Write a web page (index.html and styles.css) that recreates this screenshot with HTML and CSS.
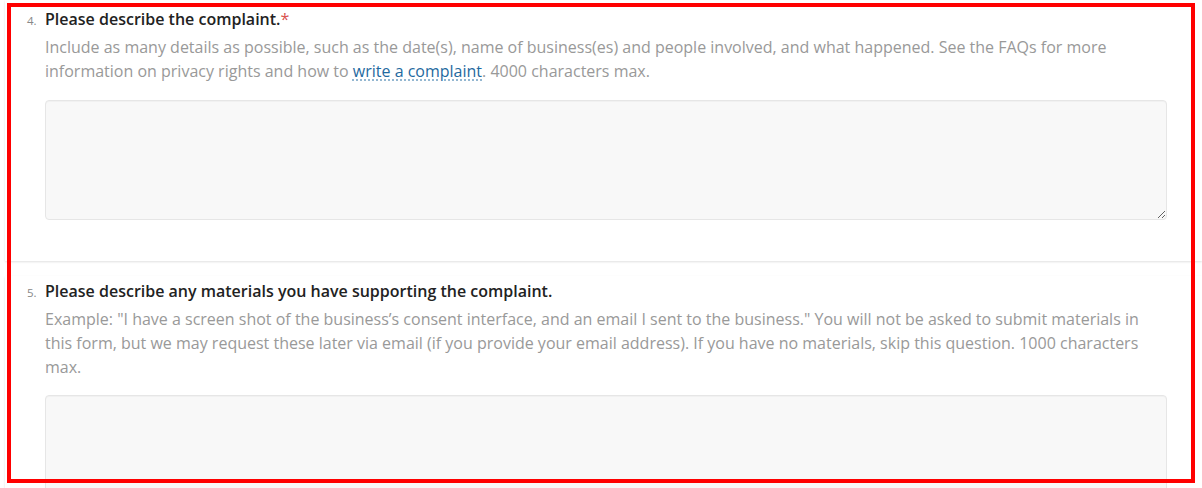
FILE: index.html
```html
<!DOCTYPE html>
<html lang="en">
<head>
<meta charset="utf-8">
<title>Complaint form</title>
<link rel="stylesheet" href="styles.css">
</head>
<body>
<div class="form">
  <section class="card card-first">
    <div class="q">
      <span class="num">4.</span>
      <div class="body">
        <h3 class="title">Please describe the complaint.<span class="req">*</span></h3>
        <p class="desc">Include as many details as possible, such as the date(s), name of business(es) and people involved, and what happened. See the FAQs for more information on privacy rights and how to <a href="#" class="link">write a complaint</a>. 4000 characters max.</p>
        <textarea class="field"></textarea>
      </div>
    </div>
  </section>
  <section class="card card-second">
    <div class="q">
      <span class="num">5.</span>
      <div class="body">
        <h3 class="title">Please describe any materials you have supporting the complaint.</h3>
        <p class="desc">Example: "I have a screen shot of the business’s consent interface, and an email I sent to the business." You will not be asked to submit materials in this form, but we may request these later via email (if you provide your email address). If you have no materials, skip this question. 1000 characters max.</p>
        <textarea class="field"></textarea>
      </div>
    </div>
  </section>
</div>
<div class="frame"></div>
</body>
</html>
```
FILE: styles.css
```css
html, body {
  margin: 0;
  padding: 0;
  background: #fff;
  font-family: "Open Sans", "Liberation Sans", sans-serif;
  overflow: hidden;
}

.form {
  display: flex;
  flex-direction: column;
  gap: 15px;
  padding-left: 5px;
}

.card {
  background: #fff;
  box-shadow: 0 1px 2px rgba(0, 0, 0, 0.12);
  padding: 0 35px 0 22px;
}

.card-first {
  padding-top: 9px;
  padding-bottom: 41px;
}

.card-second {
  padding-top: 5px;
  padding-bottom: 40px;
}

.q {
  display: grid;
  grid-template-columns: 18px 1fr;
}

.num {
  font-size: 11.5px;
  color: #888;
  line-height: 20px;
  padding-top: 2px;
}

.title {
  margin: 0;
  font-size: 16px;
  font-weight: 600;
  line-height: 20px;
  color: #222;
}

.req {
  color: #d9534f;
  font-weight: 400;
}

.desc {
  margin: 6px 0 0;
  font-size: 16px;
  line-height: 24px;
  color: #999;
}

.link {
  color: #1f6aa0;
  text-decoration: underline dotted;
  text-decoration-color: #7aa6c6;
  text-underline-offset: 3px;
}

.field {
  display: block;
  box-sizing: border-box;
  width: 100%;
  height: 120px;
  margin-top: 17px;
  background: #f8f8f8;
  border: 1px solid #e6e6e6;
  border-radius: 4px;
  box-shadow: inset 0 1px 1px rgba(0, 0, 0, 0.03);
  font-family: inherit;
  resize: vertical;
}

.card-second .field {
  margin-top: 16px;
}

.frame {
  position: fixed;
  left: 7px;
  top: 3px;
  width: 1188px;
  height: 480px;
  box-sizing: border-box;
  border: 4px solid #ff0000;
  pointer-events: none;
}
```
